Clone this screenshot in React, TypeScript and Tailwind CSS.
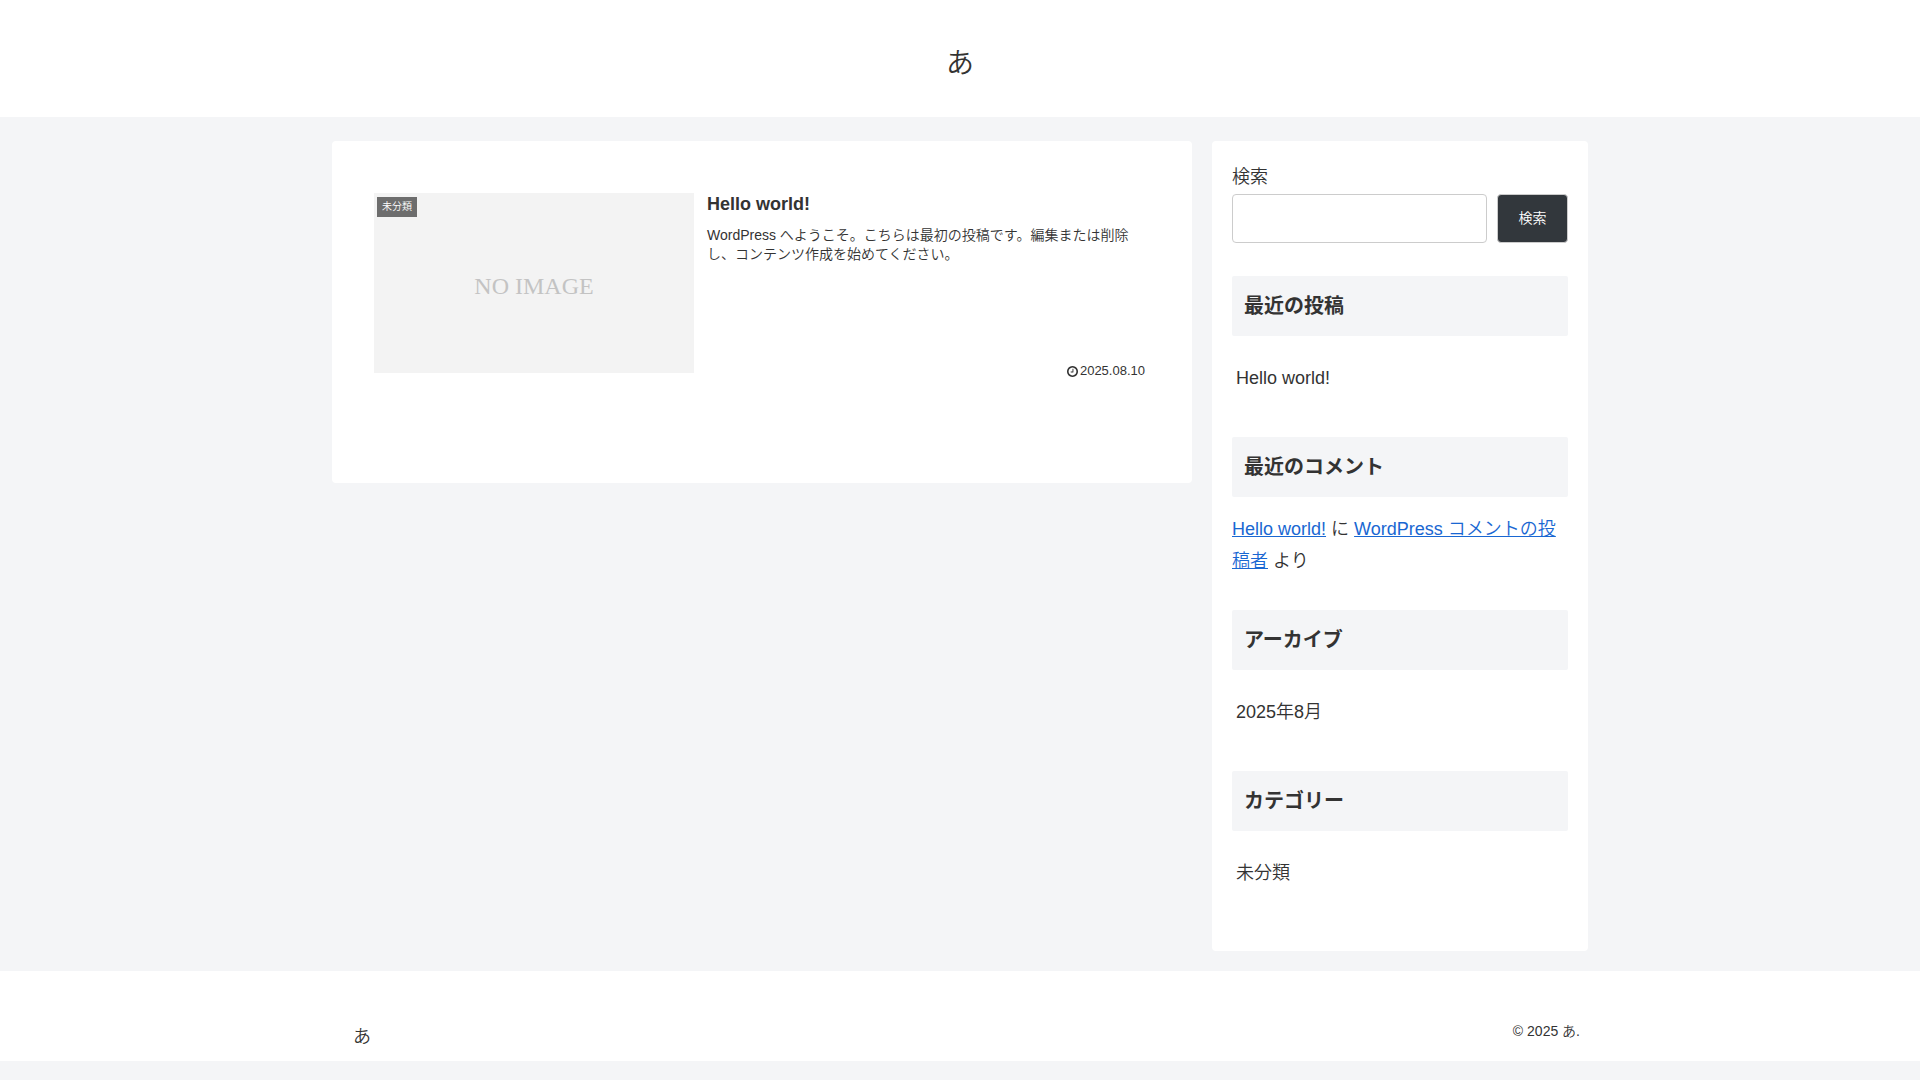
import { useState } from "react";
import type { ReactNode } from "react";

const SITE_NAME = "あ";

const POSTS = [
  {
    title: "Hello world!",
    category: "未分類",
    snippet:
      "WordPress へようこそ。こちらは最初の投稿です。編集または削除し、コンテンツ作成を始めてください。",
    date: "2025.08.10",
  },
];

const linkClass = "text-[#1967d2] underline";

function ClockIcon() {
  return (
    <svg viewBox="0 128 1536 1536" className="w-[11px] h-[11px] fill-current" aria-hidden="true">
      <path d="M896 544v448q0 14-9 23t-23 9h-320q-14 0-23-9t-9-23v-64q0-14 9-23t23-9h224v-352q0-14 9-23t23-9h64q14 0 23 9t9 23zm416 352q0-148-73-273t-198-198-273-73-273 73-198 198-73 273 73 273 198 198 273 73 273-73 198-198 73-273zm224 0q0 209-103 385.500t-279.500 279.500-385.500 103-385.500-103-279.500-279.500-103-385.500 103-385.500 279.500-279.500 385.500-103 385.500 103 279.500 279.500 103 385.500z" />
    </svg>
  );
}

function EntryCard({ post }: { post: (typeof POSTS)[number] }) {
  return (
    <a href="#" className="flex gap-[13px]">
      <div className="relative w-80 h-[180px] shrink-0 bg-[#f3f3f3] flex items-center justify-center pt-1.5">
        <span className="font-['Liberation_Serif',serif] text-2xl text-[#c3c3c3]">NO IMAGE</span>
        <span className="absolute top-1 left-[3px] h-5 px-[5px] bg-[#333]/70 text-white text-[10px] leading-5">
          {post.category}
        </span>
      </div>
      <div className="flex-1 flex flex-col -mb-2">
        <h2 className="text-lg leading-[22px] font-bold mb-[11px]">{post.title}</h2>
        <p className="text-sm leading-[19px] pr-2">{post.snippet}</p>
        <div className="mt-auto flex items-center justify-end gap-0.5 pr-[5px] text-[13px] leading-5">
          <ClockIcon />
          <time>{post.date}</time>
        </div>
      </div>
    </a>
  );
}

function Widget({ title, children }: { title: string; children: ReactNode }) {
  return (
    <section>
      <h3 className="h-[60px] px-3 mb-4 flex items-center rounded-xs bg-[#f4f5f7] text-xl font-bold">
        {title}
      </h3>
      {children}
    </section>
  );
}

function WidgetLink({ children }: { children: ReactNode }) {
  return (
    <ul className="pt-[10px] pb-[42px]">
      <li>
        <a href="#" className="block px-1 leading-[33px]">
          {children}
        </a>
      </li>
    </ul>
  );
}

export default function App() {
  const [query, setQuery] = useState("");

  return (
    <div className="min-h-screen bg-[#f4f5f7] text-[#333] text-lg font-[350] font-['Liberation_Sans','Noto_Sans_CJK_JP',sans-serif]">
      <header className="bg-white h-[117px] pt-[10px] flex items-center justify-center">
        <h1 className="text-[28px] leading-[42px]">
          <a href="#">{SITE_NAME}</a>
        </h1>
      </header>

      <div className="max-w-[1256px] mx-auto mt-6 mb-5 flex items-start gap-5">
        <main className="flex-1 min-h-[342px] bg-white rounded px-[42px] py-[52px]">
          {POSTS.map((post) => (
            <EntryCard key={post.title} post={post} />
          ))}
        </main>

        <aside className="w-[376px] shrink-0 bg-white rounded px-5 pt-5 pb-[19px]">
          {/* Search */}
          <form onSubmit={(e) => e.preventDefault()} className="mb-[33px]">
            <label htmlFor="search" className="block leading-[33px]">
              検索
            </label>
            <div className="flex gap-[10px]">
              <input
                id="search"
                type="search"
                value={query}
                onChange={(e) => setQuery(e.target.value)}
                className="flex-1 min-w-0 h-[49px] px-3 border border-[#ccc] rounded bg-white"
              />
              <button
                type="submit"
                className="w-[71px] pb-0.5 border border-[#ccc] rounded bg-[#32373c] text-white text-sm"
              >
                検索
              </button>
            </div>
          </form>

          <Widget title="最近の投稿">
            <WidgetLink>Hello world!</WidgetLink>
          </Widget>

          <Widget title="最近のコメント">
            <p className="leading-8 pb-[33px]">
              <a href="#" className={linkClass}>
                Hello world!
              </a>{" "}
              に{" "}
              <a href="#" className={linkClass}>
                WordPress コメントの投稿者
              </a>{" "}
              より
            </p>
          </Widget>

          <Widget title="アーカイブ">
            <WidgetLink>2025年8月</WidgetLink>
          </Widget>

          <Widget title="カテゴリー">
            <WidgetLink>未分類</WidgetLink>
          </Widget>
        </aside>
      </div>

      <footer className="bg-white">
        <div className="max-w-[1256px] mx-auto h-[90px] pl-[21px] pr-2 pb-2 flex items-end justify-between">
          <a href="#" className="leading-8">
            {SITE_NAME}
          </a>
          <p className="text-sm leading-[44px]">© 2025 {SITE_NAME}.</p>
        </div>
      </footer>
    </div>
  );
}
